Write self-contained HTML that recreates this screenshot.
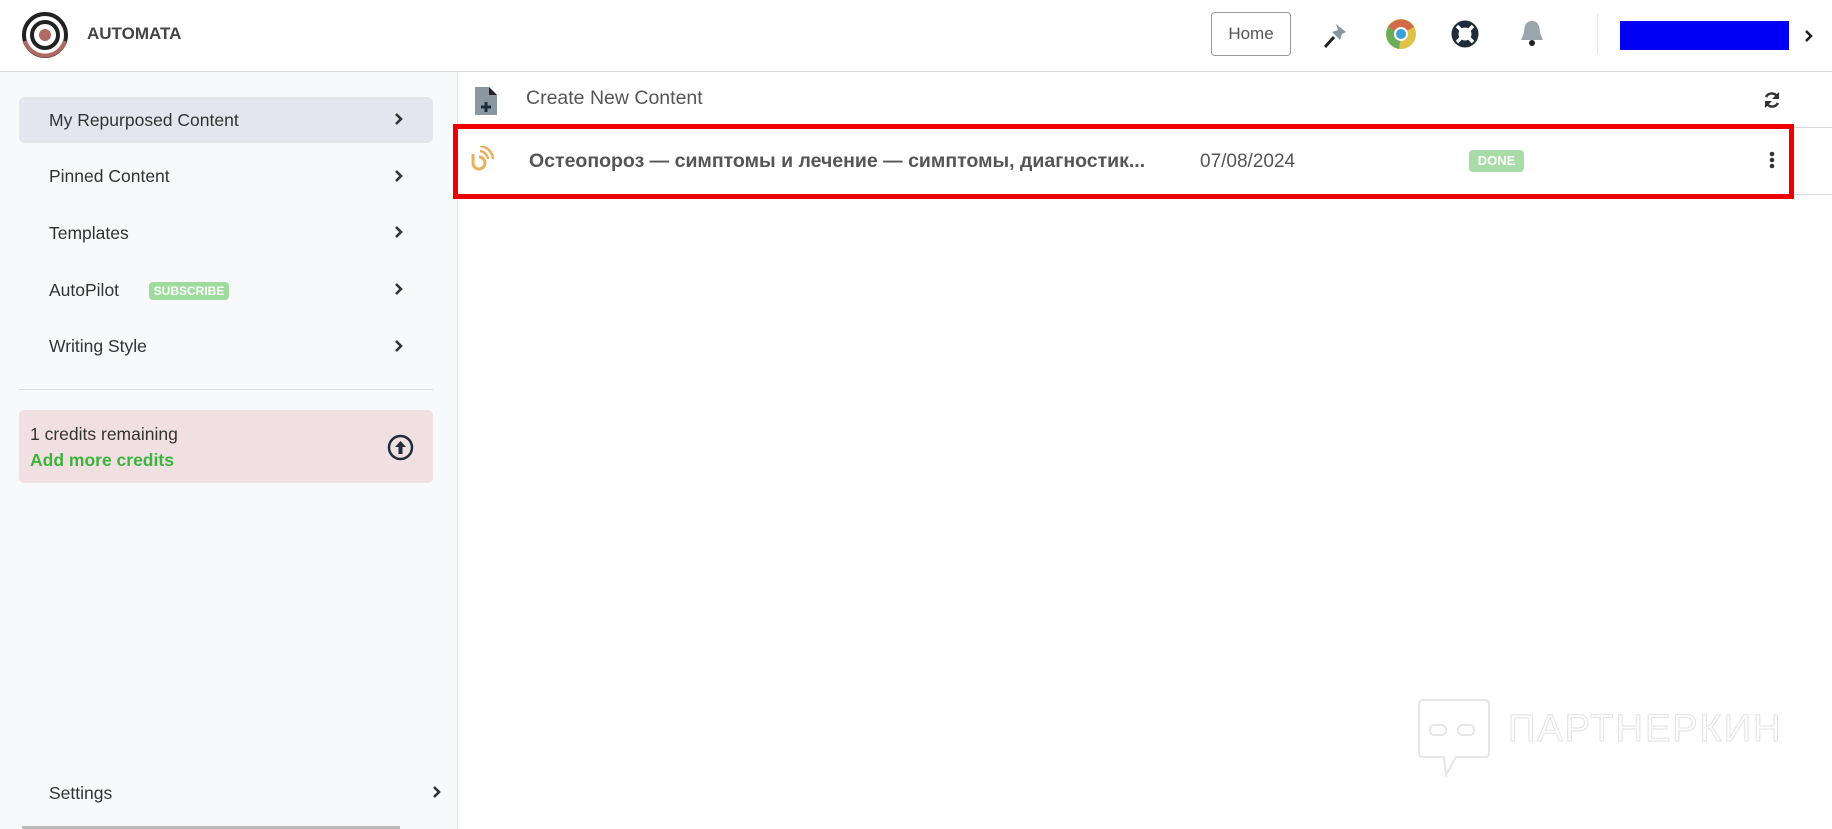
<!DOCTYPE html>
<html><head><meta charset="utf-8"><style>
*{box-sizing:border-box;margin:0;padding:0}
body{width:1832px;height:829px;overflow:hidden;background:#fff;font-family:"Liberation Sans",sans-serif;position:relative;color:#333}
.abs{position:absolute}
.hdr{left:0;top:0;width:1832px;height:72px;border-bottom:1px solid #d8d8d8;background:#fff}
.side{left:0;top:72px;width:458px;height:757px;background:#f8f9fb;border-right:1px solid #e4e4e4}
.item{position:absolute;left:49px;font-size:17.5px;color:#333}
.chev{position:absolute;width:10px;height:14px}
</style></head><body>
<div class="abs hdr"></div>
<svg class="abs" style="left:21px;top:11px" width="48" height="48" viewBox="0 0 48 48">
<circle cx="24" cy="24" r="21" fill="none" stroke="#222" stroke-width="4"/>
<path d="M4 30 A21 21 0 0 0 44 30" fill="none" stroke="#b06a62" stroke-width="4"/>
<circle cx="24" cy="24" r="13" fill="none" stroke="#222" stroke-width="4"/>
<circle cx="24" cy="24" r="6" fill="#b06a62"/>
</svg>
<div class="abs" style="left:87px;top:24px;font-size:17px;font-weight:bold;color:#444">AUTOMATA</div>
<div class="abs" style="left:1211px;top:12px;width:80px;height:44px;border:1px solid #999;border-radius:4px;font-size:17px;color:#555;text-align:center;line-height:42px">Home</div>
<svg class="abs" style="left:1322px;top:20px" width="28" height="30" viewBox="0 0 28 30"><path d="M14 4 L24 12 L20 14 L18 20 L10 12 L16 10 Z" fill="#8a96a0"/><path d="M12 17 L3 27" stroke="#222" stroke-width="3"/></svg>
<svg class="abs" style="left:1385px;top:18px" width="32" height="32" viewBox="0 0 32 32"><circle cx="16" cy="16" r="15" fill="#e0c14a"/><path d="M16 16 L3 9 A15 15 0 0 1 29 9 Z" fill="#d06a48"/><path d="M16 16 L3 9 A15 15 0 0 0 14 31 Z" fill="#6aae5a"/><circle cx="16" cy="16" r="7" fill="#fff"/><circle cx="16" cy="16" r="5" fill="#3aa0d8"/></svg>
<svg class="abs" style="left:1450px;top:19px" width="30" height="30" viewBox="0 0 30 30"><circle cx="15" cy="15" r="10" fill="none" stroke="#1f2d3a" stroke-width="7"/><path d="M7 7 L11 11 M23 7 L19 11 M7 23 L11 19 M23 23 L19 19" stroke="#fff" stroke-width="3.5"/></svg>
<svg class="abs" style="left:1519px;top:19px" width="26" height="30" viewBox="0 0 26 30"><path d="M13 2 C6 2 5 9 5 14 L2 21 L24 21 L21 14 C21 9 20 2 13 2Z" fill="#9aa6ae"/><circle cx="13" cy="24" r="3" fill="#222"/></svg>
<div class="abs" style="left:1597px;top:14px;width:1px;height:40px;background:#e4e4e4"></div>
<div class="abs" style="left:1620px;top:21px;width:169px;height:29px;background:#0000f4"></div>
<svg class="chev" style="left:1803px;top:29px" viewBox="0 0 10 14"><path d="M3 2 L8 7 L3 12" fill="none" stroke="#222" stroke-width="2.6"/></svg>

<div class="abs side"></div>
<div class="abs" style="left:19px;top:97px;width:414px;height:46px;background:#e4e6ee;border-radius:6px"></div>
<div class="item" style="top:110px">My Repurposed Content</div>
<div class="item" style="top:166px">Pinned Content</div>
<div class="item" style="top:223px">Templates</div>
<div class="item" style="top:280px">AutoPilot</div>
<div class="abs" style="left:149px;top:282px;width:80px;height:18px;background:#9fdb9c;border-radius:4px;color:#fff;font-size:12px;font-weight:bold;text-align:center;line-height:18px">SUBSCRIBE</div>
<div class="item" style="top:336px">Writing Style</div>
<svg class="chev" style="left:393px;top:112px" viewBox="0 0 10 14"><path d="M3 2 L8 7 L3 12" fill="none" stroke="#333" stroke-width="2.6"/></svg>
<svg class="chev" style="left:393px;top:169px" viewBox="0 0 10 14"><path d="M3 2 L8 7 L3 12" fill="none" stroke="#333" stroke-width="2.6"/></svg>
<svg class="chev" style="left:393px;top:225px" viewBox="0 0 10 14"><path d="M3 2 L8 7 L3 12" fill="none" stroke="#333" stroke-width="2.6"/></svg>
<svg class="chev" style="left:393px;top:282px" viewBox="0 0 10 14"><path d="M3 2 L8 7 L3 12" fill="none" stroke="#333" stroke-width="2.6"/></svg>
<svg class="chev" style="left:393px;top:339px" viewBox="0 0 10 14"><path d="M3 2 L8 7 L3 12" fill="none" stroke="#333" stroke-width="2.6"/></svg>
<div class="abs" style="left:19px;top:389px;width:414px;height:1px;background:#ddd"></div>
<div class="abs" style="left:19px;top:410px;width:414px;height:73px;background:#f0e0e2;border-radius:5px"></div>
<div class="abs" style="left:30px;top:424px;font-size:17.5px;color:#333">1 credits remaining</div>
<div class="abs" style="left:30px;top:450px;font-size:17.5px;color:#3cb43c;font-weight:bold">Add more credits</div>
<svg class="abs" style="left:387px;top:434px" width="27" height="27" viewBox="0 0 27 27"><circle cx="13.5" cy="13.5" r="11.5" fill="none" stroke="#1f2d3a" stroke-width="2.5"/><path d="M13.5 7 L19 13 L15.5 13 L15.5 20 L11.5 20 L11.5 13 L8 13 Z" fill="#1f2d3a"/></svg>
<div class="item" style="top:783px">Settings</div>
<svg class="chev" style="left:431px;top:785px" viewBox="0 0 10 14"><path d="M3 2 L8 7 L3 12" fill="none" stroke="#333" stroke-width="2.6"/></svg>
<div class="abs" style="left:22px;top:826px;width:378px;height:3px;background:#bbb"></div>

<svg class="abs" style="left:474px;top:86px" width="24" height="30" viewBox="0 0 24 30"><path d="M1 1 L15 1 L23 9 L23 29 L1 29 Z" fill="#8a96a0"/><path d="M15 1 L15 9 L23 9 Z" fill="#222"/><path d="M12 16 L12 26 M7 21 L17 21" stroke="#1f2d3a" stroke-width="3"/></svg>
<div class="abs" style="left:526px;top:87px;font-size:19.5px;color:#555">Create New Content</div>
<svg class="abs" style="left:1763px;top:91px" width="18" height="18" viewBox="0 0 18 18"><path d="M15 7 A6.5 6.5 0 0 0 3 6" fill="none" stroke="#333" stroke-width="2.5"/><path d="M3 11 A6.5 6.5 0 0 0 15 12" fill="none" stroke="#333" stroke-width="2.5"/><path d="M16 1 L16 8 L9 8Z M2 17 L2 10 L9 10Z" fill="#333"/></svg>
<div class="abs" style="left:458px;top:127px;width:1374px;height:1px;background:#d8d8d8"></div>
<div class="abs" style="left:458px;top:194px;width:1374px;height:1px;background:#d8d8d8"></div>
<div class="abs" style="left:453px;top:124px;width:1341px;height:75px;border:5px solid #e00"></div>
<svg class="abs" style="left:468px;top:146px" width="28" height="28" viewBox="0 0 28 28"><path d="M5 8 L5 17 A6 6 0 1 0 11 11" fill="none" stroke="#e8b060" stroke-width="3"/><path d="M12 5 A9 9 0 0 1 20 13 M12 0 A14 14 0 0 1 25 13" fill="none" stroke="#e8b060" stroke-width="2.5"/></svg>
<div class="abs" style="left:529px;top:150px;font-size:19.5px;font-weight:bold;color:#555">Остеопороз — симптомы и лечение — симптомы, диагностик...</div>
<div class="abs" style="left:1200px;top:151px;font-size:19px;color:#555">07/08/2024</div>
<div class="abs" style="left:1469px;top:150px;width:55px;height:22px;background:#a8dba8;border-radius:4px;color:#fff;font-size:13px;font-weight:bold;text-align:center;line-height:22px">DONE</div>
<svg class="abs" style="left:1768px;top:151px" width="8" height="20" viewBox="0 0 8 20"><circle cx="4" cy="3" r="2.3" fill="#333"/><circle cx="4" cy="9" r="2.3" fill="#333"/><circle cx="4" cy="15" r="2.3" fill="#333"/></svg>

<svg class="abs" style="left:1418px;top:699px" width="72" height="78" viewBox="0 0 72 78"><path d="M5 1 L67 1 Q71 1 71 5 L71 54 Q71 58 67 58 L38 58 L28 76 L26 58 L5 58 Q1 58 1 54 L1 5 Q1 1 5 1Z" fill="none" stroke="#e6e6e6" stroke-width="2"/><rect x="12" y="26" width="16" height="10" rx="4" fill="none" stroke="#e6e6e6" stroke-width="2"/><rect x="40" y="26" width="16" height="10" rx="4" fill="none" stroke="#e6e6e6" stroke-width="2"/></svg>
<div class="abs" style="left:1508px;top:708px;font-size:38px;color:#fff;letter-spacing:2px;-webkit-text-stroke:1px #e2e2e2">ПАРТНЕРКИН</div>
</body></html>
